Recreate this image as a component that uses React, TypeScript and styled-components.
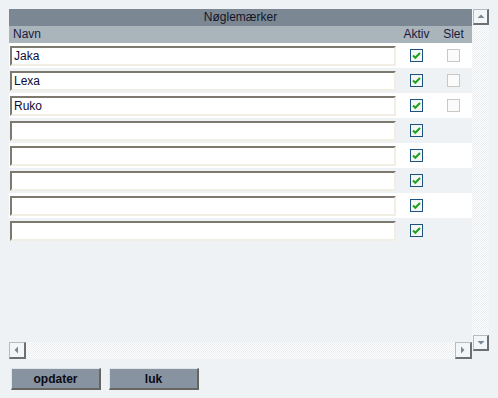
import React from "react";
import styled, { createGlobalStyle } from "styled-components";

const GlobalStyle = createGlobalStyle`
  html, body { margin: 0; padding: 0; }
  body {
    background: #eef2f4;
    font-family: "Liberation Sans", Arial, sans-serif;
    font-size: 12px;
  }
`;

const Page = styled.div`
  padding: 9px 0 0 9px;
  display: flex;
  flex-direction: column;
  gap: 9px;
`;

const Frame = styled.div`
  display: flex;
  align-items: flex-start;
`;

const LeftCol = styled.div`
  width: 463px;
  display: flex;
  flex-direction: column;
`;

const Viewport = styled.div`
  height: 333px;
  overflow: hidden;
`;

const TitleBar = styled.div`
  height: 17px;
  line-height: 17px;
  background: #7b8893;
  color: #15152a;
  text-align: center;
`;

const Grid = styled.div`
  display: grid;
  grid-template-columns: 389px 37px 37px;
`;

const HeaderRow = styled(Grid)`
  height: 17px;
  line-height: 17px;
  background: #a9b4bb;
  color: #1a1a40;
`;

const HeadCell = styled.div<{ $center?: boolean }>`
  padding-left: ${(p) => (p.$center ? "0" : "4px")};
  text-align: ${(p) => (p.$center ? "center" : "left")};
`;

const Row = styled(Grid)<{ $alt: boolean }>`
  height: 25px;
  background: ${(p) => (p.$alt ? "#eef2f4" : "#ffffff")};
  align-items: center;
`;

const NameCell = styled.div`
  padding-left: 1px;
  display: flex;
  align-items: center;
`;

const TextInput = styled.input`
  box-sizing: border-box;
  width: 386px;
  height: 20px;
  margin: 0;
  padding: 0 2px;
  border-style: solid;
  border-width: 2px;
  border-color: #7d796e #f1efe3 #f1efe3 #7d796e;
  background: #ffffff;
  font-family: "Liberation Sans", Arial, sans-serif;
  font-size: 12px;
  color: #0c0c36;
  outline: none;
`;

const BoxCell = styled.div`
  display: flex;
  justify-content: center;
  align-items: center;
`;

const Box = styled.span<{ $active: boolean }>`
  box-sizing: border-box;
  width: 13px;
  height: 13px;
  border: 1px solid ${(p) => (p.$active ? "#1c5180" : "#c9c9c1")};
  background: ${(p) => (p.$active ? "#f4f6f4" : "#fbfbfb")};
  display: flex;
  align-items: center;
  justify-content: center;
`;

const Check = () => (
  <svg width="11" height="11" viewBox="0 0 11 11">
    <path d="M2 5.5 L4.3 7.8 L9 3" stroke="#21a121" strokeWidth="2" fill="none" />
  </svg>
);

const Track = styled.div`
  background-color: #ffffff;
  background-image: repeating-conic-gradient(#e9edef 0 25%, #ffffff 0 50%);
  background-size: 2px 2px;
`;

const HScroll = styled(Track)`
  height: 17px;
  display: flex;
  justify-content: space-between;
`;

const VScroll = styled(Track)`
  width: 17px;
  height: 342px;
  display: flex;
  flex-direction: column;
  justify-content: space-between;
  align-items: flex-end;
`;

const ScrollBtn = styled.div<{ $size: number }>`
  box-sizing: border-box;
  width: ${(p) => p.$size}px;
  height: ${(p) => p.$size}px;
  background: #f3f6f8;
  border-style: solid;
  border-width: 1px 2px 2px 1px;
  border-color: #b4bcc2 #6c7073 #6c7073 #b4bcc2;
  display: flex;
  align-items: center;
  justify-content: center;
`;

const Arrow = ({ dir }: { dir: "up" | "down" | "left" | "right" }) => {
  const paths: Record<string, string> = {
    up: "M0.5 5 L4 1.5 L7.5 5 Z",
    down: "M0.5 2 L4 5.5 L7.5 2 Z",
    left: "M5 0.5 L1.5 4 L5 7.5 Z",
    right: "M2 0.5 L5.5 4 L2 7.5 Z",
  };
  return (
    <svg width="8" height="8" viewBox="0 0 8 8">
      <path d={paths[dir]} fill="#7a8894" />
    </svg>
  );
};

const ButtonBar = styled.div`
  display: flex;
  gap: 8px;
  padding-left: 2px;
`;

const ActionButton = styled.button`
  box-sizing: border-box;
  width: 90px;
  height: 22px;
  margin: 0;
  padding: 0;
  background: #8793a0;
  border-style: solid;
  border-width: 1px 2px 2px 1px;
  border-color: #dfe4e8 #66665e #66665e #dfe4e8;
  font-family: "Liberation Sans", Arial, sans-serif;
  font-size: 12px;
  font-weight: bold;
  color: #0a0a14;
`;

type Item = { name: string; existing: boolean };

const items: Item[] = [
  { name: "Jaka", existing: true },
  { name: "Lexa", existing: true },
  { name: "Ruko", existing: true },
  { name: "", existing: false },
  { name: "", existing: false },
  { name: "", existing: false },
  { name: "", existing: false },
  { name: "", existing: false },
];

export default function App() {
  return (
    <>
      <GlobalStyle />
      <Page>
        <Frame>
          <LeftCol>
            <Viewport>
              <TitleBar>Nøglemærker</TitleBar>
              <HeaderRow>
                <HeadCell>Navn</HeadCell>
                <HeadCell $center>Aktiv</HeadCell>
                <HeadCell $center>Slet</HeadCell>
              </HeaderRow>
              {items.map((it, i) => (
                <Row key={i} $alt={i % 2 === 1}>
                  <NameCell>
                    <TextInput defaultValue={it.name} />
                  </NameCell>
                  <BoxCell>
                    <Box $active>
                      <Check />
                    </Box>
                  </BoxCell>
                  <BoxCell>{it.existing && <Box $active={false} />}</BoxCell>
                </Row>
              ))}
            </Viewport>
            <HScroll>
              <ScrollBtn $size={17}>
                <Arrow dir="left" />
              </ScrollBtn>
              <ScrollBtn $size={17}>
                <Arrow dir="right" />
              </ScrollBtn>
            </HScroll>
          </LeftCol>
          <VScroll>
            <ScrollBtn $size={16}>
              <Arrow dir="up" />
            </ScrollBtn>
            <ScrollBtn $size={16}>
              <Arrow dir="down" />
            </ScrollBtn>
          </VScroll>
        </Frame>
        <ButtonBar>
          <ActionButton>opdater</ActionButton>
          <ActionButton>luk</ActionButton>
        </ButtonBar>
      </Page>
    </>
  );
}
